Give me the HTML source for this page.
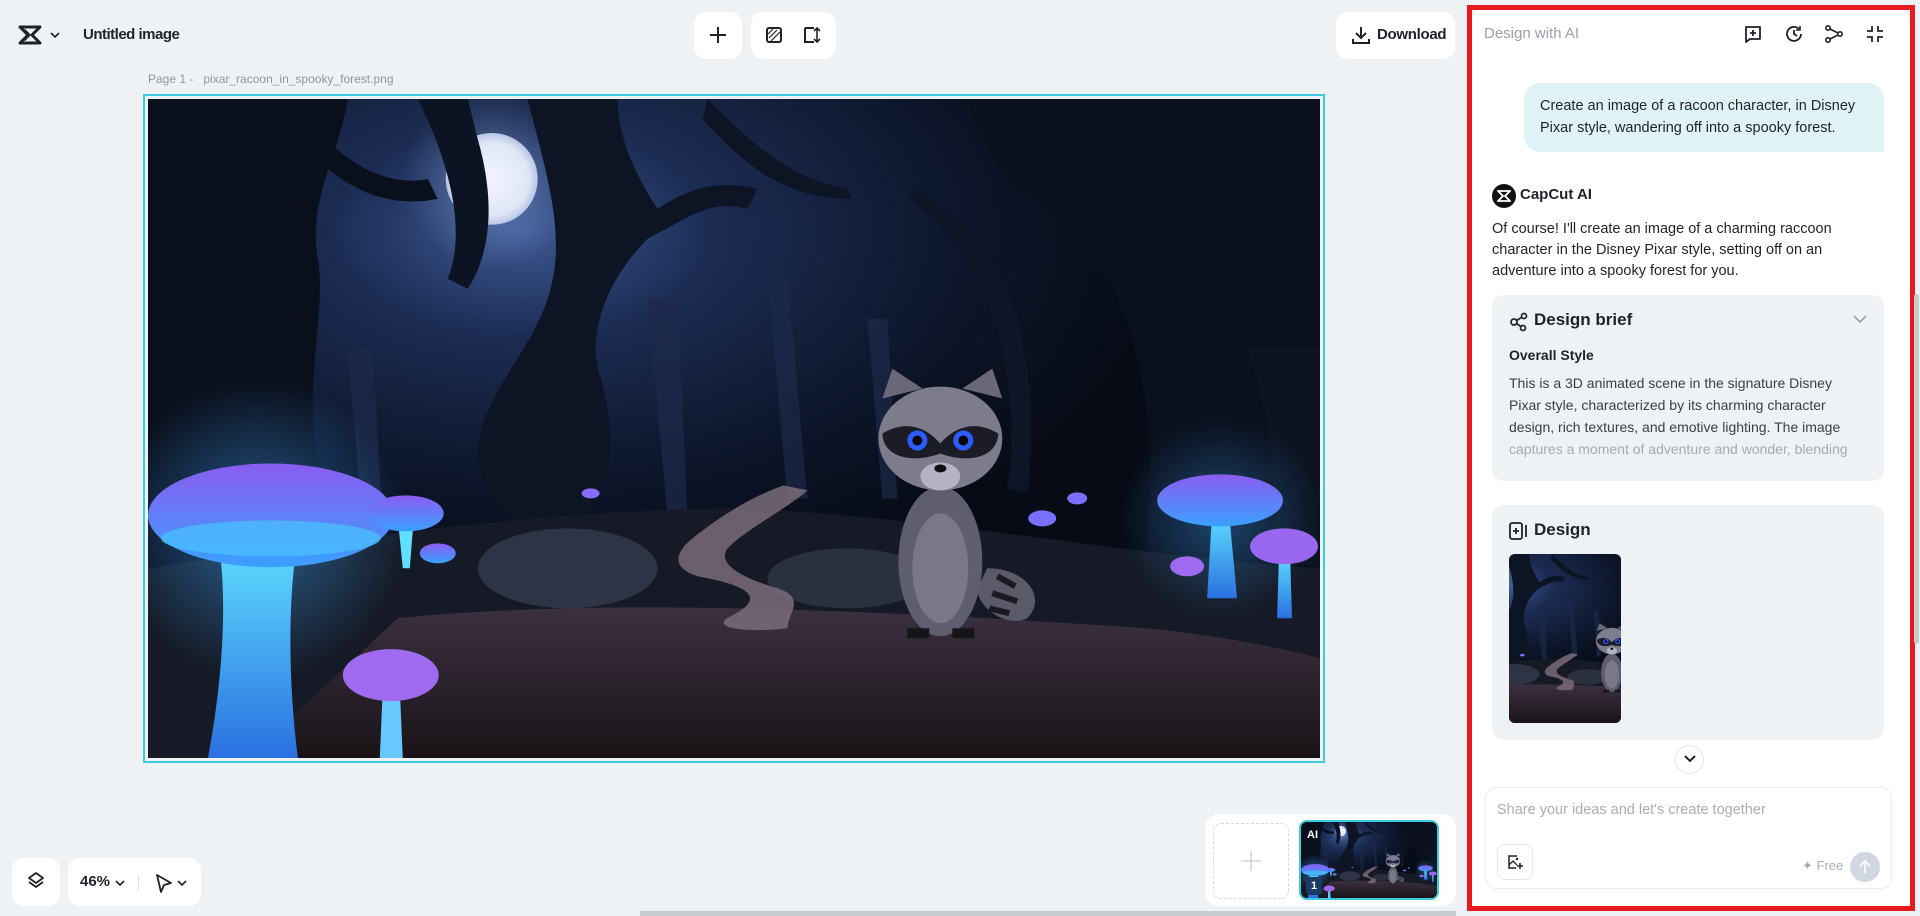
<!DOCTYPE html>
<html><head><meta charset="utf-8">
<style>
*{box-sizing:border-box;margin:0;padding:0}
body{width:1920px;height:916px;overflow:hidden;background:#eef2f5;font-family:"Liberation Sans",sans-serif;color:#1f2329;position:relative}
.abs{position:absolute}
.btn{position:absolute;background:#fff;border-radius:12px}
.t{position:absolute;white-space:nowrap}
svg{display:block}
</style></head><body>
<svg width="0" height="0" style="position:absolute">
<defs>
<radialGradient id="sky" cx="0.32" cy="0.2" r="0.55"><stop offset="0" stop-color="#3d5a94"/><stop offset="0.3" stop-color="#1b2b52"/><stop offset="0.7" stop-color="#0c1529"/><stop offset="1" stop-color="#070b16"/></radialGradient>
<radialGradient id="moon" cx="0.5" cy="0.5" r="0.5"><stop offset="0" stop-color="#f1f5ff"/><stop offset="0.8" stop-color="#dfe6f5"/><stop offset="1" stop-color="#b8c6e6"/></radialGradient>
<radialGradient id="halo" cx="0.5" cy="0.5" r="0.5"><stop offset="0" stop-color="#8fa9e0" stop-opacity="0.5"/><stop offset="1" stop-color="#8fa9e0" stop-opacity="0"/></radialGradient>
<radialGradient id="glow" cx="0.5" cy="0.5" r="0.5"><stop offset="0" stop-color="#3fa8ff" stop-opacity="0.5"/><stop offset="1" stop-color="#3fa8ff" stop-opacity="0"/></radialGradient>
<linearGradient id="cap" x1="0" y1="0" x2="0" y2="1"><stop offset="0" stop-color="#8a5cf0"/><stop offset="1" stop-color="#3aa0ff"/></linearGradient>
<linearGradient id="stem" x1="0" y1="0" x2="0" y2="1"><stop offset="0" stop-color="#5fe0ff"/><stop offset="1" stop-color="#2a70e0"/></linearGradient>
<linearGradient id="ground" x1="0" y1="0" x2="0" y2="1"><stop offset="0" stop-color="#3b3040"/><stop offset="1" stop-color="#1a1418"/></linearGradient>
<symbol id="scene" viewBox="0 0 1173 660" preserveAspectRatio="none">
<rect width="1173" height="660" fill="url(#sky)"/>
<circle cx="344" cy="80" r="90" fill="url(#halo)"/>
<circle cx="344" cy="80" r="46" fill="url(#moon)"/>
<g fill="#1c2a4a" opacity="0.7">
<path d="M500 200L520 420H540L530 200Z"/><path d="M620 180L640 400H660L640 180Z"/><path d="M720 220L735 400H750L740 220Z"/><path d="M200 250L215 430H235L225 250Z"/>
</g>
<path d="M0 0H200C190 60 160 100 170 160 180 220 150 300 175 380 200 440 160 500 120 520L0 540Z" fill="#0a0f1c"/>
<path d="M150 0C180 60 240 90 280 80L290 100C240 110 200 90 170 60Z" fill="#0a0f1c"/>
<path d="M270 0C300 60 320 130 300 180L320 190C340 160 350 110 330 40L320 0Z" fill="#0c1322"/>
<path d="M380 0C400 80 420 140 400 200 380 260 330 300 330 360 340 420 380 430 420 430 470 400 470 330 450 270 440 220 470 170 500 140 540 120 560 100 600 110L610 90C570 80 540 90 510 110 490 80 470 40 470 0Z" fill="#0d1424"/>
<path d="M560 0C600 40 640 80 700 90L705 100C640 100 600 70 555 20Z" fill="#0d1424"/>
<path d="M880 0H1173V520L1000 510C1000 420 1010 340 990 260 970 180 940 140 900 110 860 90 840 60 820 0Z" fill="#0a101e"/>
<path d="M760 100C800 130 830 170 850 230 860 270 870 320 860 390L880 395C890 320 880 260 870 220 850 160 820 120 770 90Z" fill="#0d1526"/>
<path d="M1100 250C1120 300 1130 380 1130 460L1173 470V250Z" fill="#0c1423"/>
<path d="M0 470C200 440 400 410 600 410 800 420 1000 460 1173 470V660H0Z" fill="#151a26"/>
<path d="M250 520C450 500 700 510 1000 530 1100 540 1173 560 1173 560V660H100Z" fill="url(#ground)"/>
<path d="M636 387C600 400 570 420 545 440 520 460 530 475 560 480 600 488 620 500 583 518 560 530 600 535 640 530 640 515 660 500 630 490 590 478 570 465 580 450 600 430 640 410 660 392Z" fill="#7a6c78" opacity="0.85"/>
<ellipse cx="420" cy="470" rx="90" ry="40" fill="#6a7290" opacity="0.3"/>
<ellipse cx="700" cy="480" rx="80" ry="30" fill="#6a7290" opacity="0.25"/>
<circle cx="110" cy="430" r="150" fill="url(#glow)"/>
<path d="M70 440C80 500 75 580 60 660H150C140 580 140 500 150 440Z" fill="url(#stem)"/>
<ellipse cx="123" cy="417" rx="123" ry="52" fill="url(#cap)"/>
<ellipse cx="123" cy="440" rx="110" ry="18" fill="#49c3ff" opacity="0.7"/>
<path d="M250 420L255 470H262L266 420Z" fill="#5fe0ff"/>
<ellipse cx="258" cy="415" rx="38" ry="18" fill="url(#cap)"/>
<ellipse cx="290" cy="455" rx="18" ry="10" fill="url(#cap)"/>
<path d="M235 590L232 660H255L252 590Z" fill="#66c8ff"/>
<ellipse cx="243" cy="577" rx="48" ry="26" fill="#a06af0"/>
<circle cx="1073" cy="420" r="100" fill="url(#glow)" opacity="0.7"/>
<path d="M1065 415L1060 500H1090L1082 415Z" fill="url(#stem)"/>
<ellipse cx="1073" cy="402" rx="63" ry="26" fill="url(#cap)"/>
<path d="M1132 455L1130 520H1145L1143 455Z" fill="url(#stem)"/>
<ellipse cx="1137" cy="448" rx="34" ry="18" fill="#9a68f0"/>
<ellipse cx="1040" cy="468" rx="17" ry="10" fill="#a06af0"/>
<ellipse cx="895" cy="420" rx="14" ry="8" fill="#7a70ff"/>
<ellipse cx="930" cy="400" rx="10" ry="6" fill="#7a70ff"/>
<ellipse cx="443" cy="395" rx="9" ry="5" fill="#8a6aff"/>
<path d="M840 470C880 470 900 500 880 520 860 530 830 510 830 490Z" fill="#5a5a68"/>
<path d="M850 478l18 10M845 495l25 8M842 510l20 5" stroke="#1a1a22" stroke-width="6"/>
<ellipse cx="793" cy="463" rx="42" ry="75" fill="#5e5e70"/>
<ellipse cx="793" cy="470" rx="28" ry="55" fill="#7a7888"/>
<path d="M760 530h22v10h-22zM805 530h22v10h-22z" fill="#151518"/>
<path d="M735 300L745 270 775 290Z M855 300L845 270 815 290Z" fill="#6a6878"/>
<ellipse cx="793" cy="340" rx="62" ry="52" fill="#7d7c8c"/>
<path d="M735 335C760 320 780 330 793 345 806 330 826 320 851 335 850 360 820 365 793 355 766 365 736 360 735 335Z" fill="#1c1c26"/>
<circle cx="770" cy="342" r="10" fill="#2a5cff"/><circle cx="816" cy="342" r="10" fill="#2a5cff"/>
<circle cx="770" cy="342" r="5" fill="#05050a"/><circle cx="816" cy="342" r="5" fill="#05050a"/>
<ellipse cx="793" cy="378" rx="20" ry="14" fill="#b6b2c2"/>
<ellipse cx="793" cy="370" rx="6" ry="4" fill="#101014"/>
</symbol>
</defs></svg>

<!-- top left -->
<svg class="abs" style="left:18px;top:25px" width="26" height="20" viewBox="0 0 26 20"><path d="M2 2h20l-8 8 8 8H2l8-8z M6 5l5 5-5 5" fill="none" stroke="#1f2329" stroke-width="3" stroke-linejoin="round"/></svg>
<svg class="abs" style="left:49px;top:30px" width="12" height="10" viewBox="0 0 12 10"><path d="M2 3l4 4 4-4" fill="none" stroke="#1f2329" stroke-width="1.6"/></svg>
<div class="t" style="left:83px;top:26px;font-size:15px;font-weight:bold;letter-spacing:-0.5px">Untitled image</div>

<!-- top center -->
<div class="btn" style="left:694px;top:12px;width:48px;height:47px"></div>
<svg class="abs" style="left:708px;top:25px" width="20" height="20" viewBox="0 0 20 20"><path d="M10 2v16M2 10h16" stroke="#1f2329" stroke-width="2"/></svg>
<div class="btn" style="left:751px;top:12px;width:85px;height:47px"></div>
<svg class="abs" style="left:765px;top:26px" width="18" height="18" viewBox="0 0 18 18"><rect x="2" y="2" width="14" height="14" rx="2" fill="none" stroke="#1f2329" stroke-width="2"/><path d="M4 12l8-8M6 15l9-9M3 8l5-5" stroke="#1f2329" stroke-width="1.2"/></svg>
<svg class="abs" style="left:801px;top:25px" width="20" height="20" viewBox="0 0 20 20"><path d="M4 3v14h9M4 3h9" fill="none" stroke="#1f2329" stroke-width="2"/><path d="M16 3v14M13 6l3-3 3 3M13 14l3 3 3-3" fill="none" stroke="#1f2329" stroke-width="1.6"/></svg>

<!-- download -->
<div class="btn" style="left:1336px;top:12px;width:119px;height:47px"></div>
<svg class="abs" style="left:1351px;top:25px" width="20" height="20" viewBox="0 0 20 20"><path d="M10 2v11M5 8l5 5 5-5M2 14v4h16v-4" fill="none" stroke="#1f2329" stroke-width="2"/></svg>
<div class="t" style="left:1377px;top:26px;font-size:15px;font-weight:bold;letter-spacing:-0.3px">Download</div>

<!-- page label -->
<div class="t" style="left:148px;top:72px;font-size:12px;color:#8f959e">Page 1 -&nbsp;&nbsp; pixar_racoon_in_spooky_forest.png</div>

<!-- canvas -->
<div class="abs" style="left:143px;top:94px;width:1182px;height:669px;border:2px solid #3ccbe0"></div>
<svg class="abs" style="left:148px;top:99px" width="1172" height="659"><use href="#scene"/></svg>

<!-- bottom left -->
<div class="btn" style="left:12px;top:858px;width:48px;height:48px"></div>
<svg class="abs" style="left:26px;top:871px" width="20" height="20" viewBox="0 0 20 20"><path d="M10 2l7 5-7 5-7-5z" fill="none" stroke="#1f2329" stroke-width="1.8" stroke-linejoin="round"/><path d="M3 11l7 5 7-5" fill="none" stroke="#1f2329" stroke-width="1.8" stroke-linejoin="round"/></svg>
<div class="btn" style="left:68px;top:858px;width:133px;height:48px"></div>
<div class="t" style="left:80px;top:873px;font-size:15px;font-weight:bold">46%</div>
<svg class="abs" style="left:114px;top:878px" width="12" height="10" viewBox="0 0 12 10"><path d="M2 3l4 4 4-4" fill="none" stroke="#1f2329" stroke-width="1.6"/></svg>
<div class="abs" style="left:138px;top:875px;width:1px;height:15px;background:#dde1e6"></div>
<svg class="abs" style="left:154px;top:873px" width="20" height="20" viewBox="0 0 20 20"><path d="M3 2l14 8-7 2-3 7z" fill="none" stroke="#1f2329" stroke-width="1.8" stroke-linejoin="round"/></svg>
<svg class="abs" style="left:176px;top:878px" width="12" height="10" viewBox="0 0 12 10"><path d="M2 3l4 4 4-4" fill="none" stroke="#1f2329" stroke-width="1.6"/></svg>

<!-- tray -->
<div class="btn" style="left:1205px;top:814px;width:251px;height:92px;border-radius:14px"></div>
<div class="abs" style="left:1213px;top:823px;width:76px;height:76px;border:1.5px dashed #d5d9de;border-radius:8px"></div>
<svg class="abs" style="left:1240px;top:850px" width="22" height="22" viewBox="0 0 22 22"><path d="M11 1v20M1 11h20" stroke="#d0d4d9" stroke-width="1.6"/></svg>
<div class="abs" style="left:1299px;top:820px;width:140px;height:80px;border:2px solid #3ccbe0;border-radius:8px;overflow:hidden"><svg width="136" height="76"><use href="#scene"/></svg></div>
<div class="t" style="left:1307px;top:829px;font-size:11px;font-weight:bold;color:#fff">AI</div>
<div class="abs" style="left:1306px;top:877px;width:16px;height:18px;background:#1b3a66;border-radius:4px;color:#fff;font-size:11px;font-weight:bold;text-align:center;line-height:18px">1</div>

<!-- bottom scrollbar -->
<div class="abs" style="left:640px;top:911px;width:816px;height:5px;background:#c8cbcf"></div>

<!-- right panel -->
<div class="abs" style="left:1467px;top:5px;width:448px;height:906px;border:5px solid #e8191f"></div>
<div class="abs" style="left:1472px;top:10px;width:438px;height:896px;background:#fff;border-radius:10px 10px 0 0"></div>
<div class="abs" style="left:1914px;top:294px;width:5px;height:350px;background:#c8cbcf;border-radius:3px"></div>
<div class="t" style="left:1484px;top:25px;font-size:15px;color:#9aa0a8">Design with AI</div>
<svg class="abs" style="left:1743px;top:24px" width="20" height="20" viewBox="0 0 20 20"><path d="M3 3h14v12H7l-4 3z" fill="none" stroke="#1f2329" stroke-width="1.8" stroke-linejoin="round"/><path d="M10 6v6M7 9h6" stroke="#1f2329" stroke-width="1.8"/></svg>
<svg class="abs" style="left:1784px;top:24px" width="20" height="20" viewBox="0 0 20 20"><path d="M17 10a7 7 0 1 1-2-5" fill="none" stroke="#1f2329" stroke-width="1.8"/><path d="M16 2v4h-4" fill="none" stroke="#1f2329" stroke-width="1.6"/><path d="M10 6v4l3 2" fill="none" stroke="#1f2329" stroke-width="1.8"/></svg>
<svg class="abs" style="left:1824px;top:24px" width="20" height="20" viewBox="0 0 20 20"><circle cx="4" cy="4" r="2.2" fill="none" stroke="#1f2329" stroke-width="1.6"/><circle cx="4" cy="16" r="2.2" fill="none" stroke="#1f2329" stroke-width="1.6"/><circle cx="16" cy="10" r="2.2" fill="none" stroke="#1f2329" stroke-width="1.6"/><path d="M6 5l8 4M6 15l8-4" stroke="#1f2329" stroke-width="1.6"/></svg>
<svg class="abs" style="left:1865px;top:24px" width="20" height="20" viewBox="0 0 20 20"><path d="M7 2v5H2M13 2v5h5M7 18v-5H2M13 18v-5h5" fill="none" stroke="#1f2329" stroke-width="1.8"/></svg>

<div class="abs" style="left:1524px;top:83px;width:360px;height:69px;background:#dff3f7;border-radius:16px 16px 0 16px"></div>
<div class="t" style="left:1540px;top:95px;font-size:14.5px;line-height:22px;color:#1f2329">Create an image of a racoon character, in Disney<br>Pixar style, wandering off into a spooky forest.</div>

<div class="abs" style="left:1492px;top:184px;width:24px;height:24px;border-radius:50%;background:#111"></div>
<svg class="abs" style="left:1497px;top:190px" width="14" height="12" viewBox="0 0 14 12"><path d="M1 1h12L8 6l5 5H1l5-5z" fill="none" stroke="#fff" stroke-width="1.8"/></svg>
<div class="t" style="left:1520px;top:186px;font-size:15px;font-weight:bold">CapCut AI</div>
<div class="t" style="left:1492px;top:219px;font-size:14.5px;line-height:21px">Of course! I'll create an image of a charming raccoon<br>character in the Disney Pixar style, setting off on an<br>adventure into a spooky forest for you.</div>

<div class="abs" style="left:1492px;top:295px;width:392px;height:186px;background:#eff2f5;border-radius:12px"></div>
<svg class="abs" style="left:1509px;top:312px" width="20" height="20" viewBox="0 0 20 20"><circle cx="5" cy="10" r="3" fill="none" stroke="#1f2329" stroke-width="1.7"/><circle cx="15" cy="4" r="2.5" fill="none" stroke="#1f2329" stroke-width="1.7"/><circle cx="14" cy="16" r="2.5" fill="none" stroke="#1f2329" stroke-width="1.7"/><path d="M7.5 8.5l5-3M7.5 11.5l4.5 3" stroke="#1f2329" stroke-width="1.7"/></svg>
<div class="t" style="left:1534px;top:310px;font-size:17px;font-weight:bold">Design brief</div>
<svg class="abs" style="left:1852px;top:314px" width="16" height="10" viewBox="0 0 16 10"><path d="M2 2l6 6 6-6" fill="none" stroke="#8f959e" stroke-width="1.4"/></svg>
<div class="t" style="left:1509px;top:347px;font-size:14px;font-weight:bold">Overall Style</div>
<div class="t" style="left:1509px;top:372px;font-size:14px;line-height:22px;color:#3a3f45">This is a 3D animated scene in the signature Disney<br>Pixar style, characterized by its charming character<br>design, rich textures, and emotive lighting. The image<br><span style="color:#a5abb2">captures a moment of adventure and wonder, blending</span></div>

<div class="abs" style="left:1492px;top:505px;width:392px;height:235px;background:#eff2f5;border-radius:12px"></div>
<svg class="abs" style="left:1509px;top:522px" width="20" height="18" viewBox="0 0 20 18"><rect x="1" y="1" width="12" height="16" rx="2" fill="none" stroke="#1f2329" stroke-width="1.8"/><path d="M7 6v6M4 9h6M17 3v12" stroke="#1f2329" stroke-width="1.8"/></svg>
<div class="t" style="left:1534px;top:520px;font-size:17px;font-weight:bold">Design</div>
<div class="abs" style="left:1509px;top:554px;width:112px;height:169px;border-radius:6px;overflow:hidden"><svg width="112" height="169" viewBox="0 0 112 169"><svg x="-100" y="0" width="300" height="169"><use href="#scene"/></svg></svg></div>

<div class="abs" style="left:1675px;top:745px;width:29px;height:29px;border:1px solid #e4e7eb;border-radius:50%;background:#fff"></div>
<svg class="abs" style="left:1683px;top:754px" width="14" height="10" viewBox="0 0 14 10"><path d="M2 2l5 5 5-5" fill="none" stroke="#1f2329" stroke-width="2"/></svg>

<div class="abs" style="left:1485px;top:787px;width:407px;height:102px;border:1px solid #eceef1;border-radius:12px;background:#fff;box-shadow:0 1px 4px rgba(0,0,0,0.04)"></div>
<div class="t" style="left:1497px;top:802px;font-size:14.5px;color:#a8adb4">Share your ideas and let's create together</div>
<div class="abs" style="left:1497px;top:844px;width:36px;height:36px;border:1px solid #e4e7eb;border-radius:8px"></div>
<svg class="abs" style="left:1507px;top:854px" width="16" height="16" viewBox="0 0 16 16"><path d="M10 2H2v12h7" fill="none" stroke="#1f2329" stroke-width="1.5"/><path d="M2 11l4-4 4 4" fill="none" stroke="#1f2329" stroke-width="1.3"/><circle cx="10" cy="5" r="1.2" fill="#1f2329"/><path d="M13 9v6M10 12h6" stroke="#1f2329" stroke-width="1.5"/></svg>
<div class="t" style="left:1802px;top:858px;font-size:13px;color:#a8adb4">✦ Free</div>
<div class="abs" style="left:1850px;top:852px;width:30px;height:30px;border-radius:50%;background:#d1d7e0"></div>
<svg class="abs" style="left:1858px;top:859px" width="14" height="16" viewBox="0 0 14 16"><path d="M7 14V2M2 7l5-5 5 5" fill="none" stroke="#fff" stroke-width="1.6"/></svg>
</body></html>
